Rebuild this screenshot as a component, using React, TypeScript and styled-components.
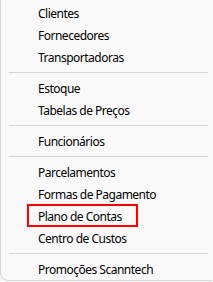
import React from 'react';
import styled, { createGlobalStyle } from 'styled-components';

const GlobalStyle = createGlobalStyle`
  html, body {
    margin: 0;
    padding: 0;
    background: #f9f9f9;
  }
`;

const Menu = styled.div`
  width: 212px;
  height: 281px;
  padding-top: 2px;
  box-sizing: border-box;
  background: #f9f9f9;
  border-left: 1px solid #d6d6d6;
  border-bottom: 1px solid #d6d6d6;
  border-bottom-left-radius: 8px;
  font-family: 'Noto Sans', 'Open Sans', sans-serif;
  font-size: 12px;
  letter-spacing: -0.5px;
  color: #000;
  overflow: hidden;
`;

const Item = styled.div<{ $highlighted?: boolean }>`
  position: relative;
  height: 22px;
  display: flex;
  align-items: center;
  padding-left: 37px;
  white-space: nowrap;

  ${({ $highlighted }) =>
    $highlighted &&
    `
    &::after {
      content: '';
      position: absolute;
      left: 26px;
      top: -1px;
      width: 111px;
      height: 23px;
      box-sizing: border-box;
      border: 2px solid #f00;
    }
  `}
`;

const Separator = styled.div`
  height: 1px;
  margin: 4px 4px 4px 8px;
  background: #d5d5d5;
`;

type Entry = { label: string; highlighted?: boolean } | 'sep';

const entries: Entry[] = [
  { label: 'Clientes' },
  { label: 'Fornecedores' },
  { label: 'Transportadoras' },
  'sep',
  { label: 'Estoque' },
  { label: 'Tabelas de Preços' },
  'sep',
  { label: 'Funcionários' },
  'sep',
  { label: 'Parcelamentos' },
  { label: 'Formas de Pagamento' },
  { label: 'Plano de Contas', highlighted: true },
  { label: 'Centro de Custos' },
  'sep',
  { label: 'Promoções Scanntech' },
];

export default function App() {
  return (
    <>
      <GlobalStyle />
      <Menu>
        {entries.map((e, i) =>
          e === 'sep' ? (
            <Separator key={i} />
          ) : (
            <Item key={i} $highlighted={e.highlighted}>
              {e.label}
            </Item>
          )
        )}
      </Menu>
    </>
  );
}
